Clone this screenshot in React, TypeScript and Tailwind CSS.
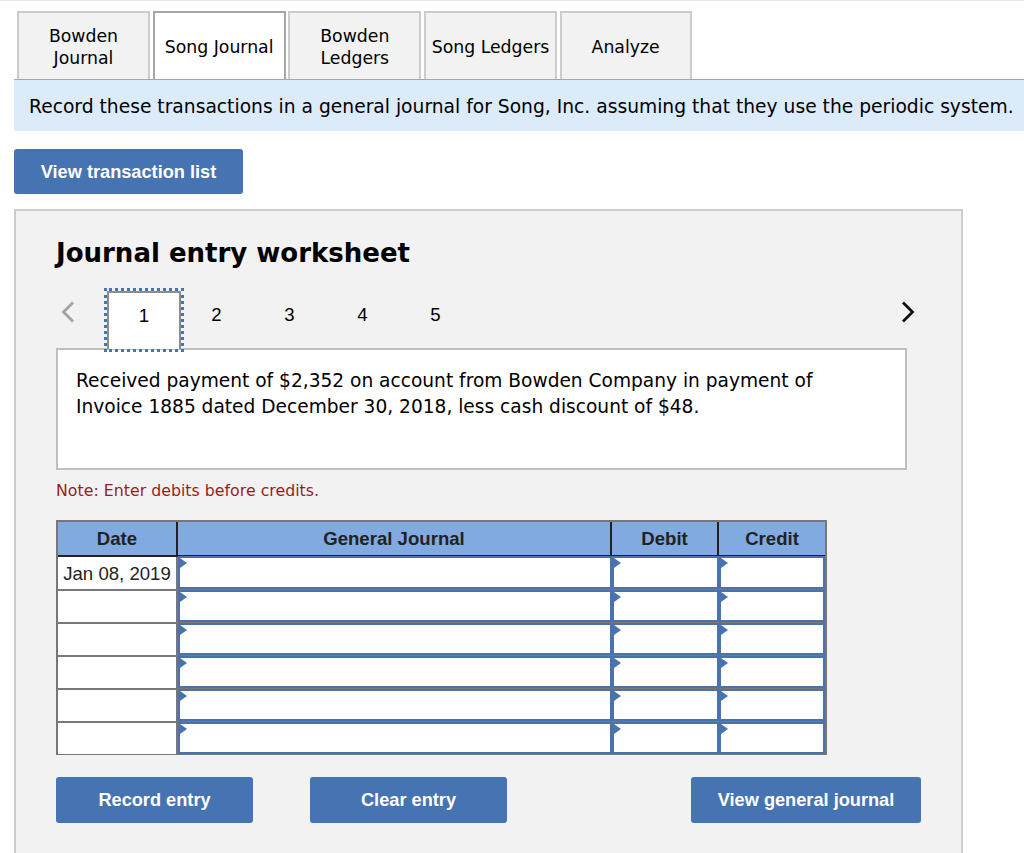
import React from 'react';

const verdana = 'font-["DejaVu_Sans",sans-serif]';
const arial = 'font-["Liberation_Sans",Arial,sans-serif]';

const tabs = [
  { label: ['Bowden', 'Journal'], width: 'w-[133px]' },
  { label: ['Song Journal'], width: 'w-[133px]', active: true },
  { label: ['Bowden', 'Ledgers'], width: 'w-[133px]' },
  { label: ['Song Ledgers'], width: 'w-[133px]' },
  { label: ['Analyze'], width: 'w-[132px]' },
];

const TabButton = ({ label, width, active }: { label: string[]; width: string; active?: boolean }) => (
  <div
    className={`${width} h-[68px] pt-[2px] flex flex-col items-center justify-center border-2 border-b-0 text-[17.3px] leading-[22px] text-black ${
      active ? 'bg-white border-[#a6a6a6] relative -mb-px' : 'bg-[#f2f2f2] border-[#cccccc]'
    }`}
  >
    {label.map((line) => (
      <span key={line}>{line}</span>
    ))}
  </div>
);

const BlueButton = ({ children, width, height = 'h-[46px]' }: { children: React.ReactNode; width: string; height?: string }) => (
  <button className={`${width} ${height} pt-[2px] rounded-[3px] bg-[#4673b2] text-white text-[18.2px] font-bold ${arial}`}>
    {children}
  </button>
);

const EntryCell = ({ width }: { width: string }) => (
  <div className={`${width} relative border-2 border-[#4a72ab] bg-white -mt-px`}>
    <span className="absolute left-0 top-0 w-0 h-0 border-y-[5px] border-y-transparent border-l-[7px] border-l-[#4673b2]" />
  </div>
);

const rows = ['Jan 08, 2019', '', '', '', '', ''];

const App = () => {
  return (
    <div className={`w-[1024px] h-[853px] overflow-hidden bg-white border-t border-[#e6e6e6] ${verdana}`}>
      <div className="pl-[14px] pt-[10px]">
        <div className="flex gap-[2.67px] pl-[3px] border-b border-[#a6a6a6]">
          {tabs.map((tab) => (
            <TabButton key={tab.label.join(' ')} {...tab} />
          ))}
        </div>
        <div className="h-[51px] pt-[3px] flex items-center pl-[15px] bg-[#dcebf9] text-[18.7px] text-black whitespace-nowrap">
          Record these transactions in a general journal for Song, Inc. assuming that they use the periodic system.
        </div>
        <div className="mt-[18px] flex">
          <BlueButton width="w-[229px]" height="h-[45px]">View transaction list</BlueButton>
        </div>

        <div className="mt-[15px] w-[949px] h-[700px] border-2 border-[#cccccc] bg-[#f2f2f2] px-[40px]">
          <h2 className="mt-[26px] text-[26px] leading-[32px] font-bold text-black">Journal entry worksheet</h2>

          <div className={`mt-[22px] h-[58px] flex items-start ${arial}`}>
            <svg width="14" height="22" viewBox="0 0 14 22" className="ml-[5px] mt-[10px]" fill="none" stroke="#a3a3a3" strokeWidth="2.8">
              <path d="M12 1.5 2.5 11 12 20.5" />
            </svg>
            <div className="ml-[32px] h-full flex text-[18.6px] text-black">
              <div className="w-[74px] h-full pb-[10px] flex items-center justify-center bg-white border-2 border-b-0 border-[#8c8c8c] outline-[3px] outline-dotted outline-[#4673b2] relative z-10 -mr-[1px]">
                1
              </div>
              <div className="w-[73px] pb-[10px] flex items-center justify-center">2</div>
              <div className="w-[73px] pb-[10px] flex items-center justify-center">3</div>
              <div className="w-[73px] pb-[10px] flex items-center justify-center">4</div>
              <div className="w-[73px] pb-[10px] flex items-center justify-center">5</div>
            </div>
            <svg width="14" height="22" viewBox="0 0 14 22" className="ml-auto mr-[6px] mt-[10px]" fill="none" stroke="#111111" strokeWidth="2.8">
              <path d="M2 1.5 11.5 11 2 20.5" />
            </svg>
          </div>

          <div className="w-[851px] h-[122px] -mt-px border-2 border-[#bfbfbf] bg-white px-[18px] pt-[18px] text-[18.6px] leading-[26px] text-black">
            <div>Received payment of $2,352 on account from Bowden Company in payment of</div>
            <div>Invoice 1885 dated December 30, 2018, less cash discount of $48.</div>
          </div>

          <div className="mt-[11px] text-[15.8px] leading-[20px] text-[#9b1c1c]">Note: Enter debits before credits.</div>

          <div className={`mt-[19px] w-[771px] border-2 border-b border-[#777777] ${arial} text-[18.6px] text-[#222222]`}>
            <div className="flex h-[35px] bg-[#81abe0] font-bold border-b-2 border-[#222222]">
              <div className="w-[120px] pt-px flex items-center justify-center border-r-2 border-[#222222]">Date</div>
              <div className="w-[434px] pt-px flex items-center justify-center border-r-2 border-[#222222]">General Journal</div>
              <div className="w-[107px] pt-px flex items-center justify-center border-r-2 border-[#222222]">Debit</div>
              <div className="flex-1 pt-px flex items-center justify-center">Credit</div>
            </div>
            {rows.map((date, index) => (
              <div key={index} className={`flex ${index > 0 ? 'h-[33px] border-t-2 border-[#777777]' : 'h-[32px]'}`}>
                <div className="w-[120px] pt-px bg-white flex items-center justify-center border-r-2 border-[#777777]">{date}</div>
                <EntryCell width="w-[434px]" />
                <EntryCell width="w-[107px]" />
                <EntryCell width="flex-1" />
              </div>
            ))}
          </div>

          <div className="mt-[22px] flex w-[865px]">
            <BlueButton width="w-[197px]">Record entry</BlueButton>
            <div className="ml-[57px]">
              <BlueButton width="w-[197px]">Clear entry</BlueButton>
            </div>
            <div className="ml-auto">
              <BlueButton width="w-[230px]">View general journal</BlueButton>
            </div>
          </div>
        </div>
      </div>
    </div>
  );
};

export default App;
